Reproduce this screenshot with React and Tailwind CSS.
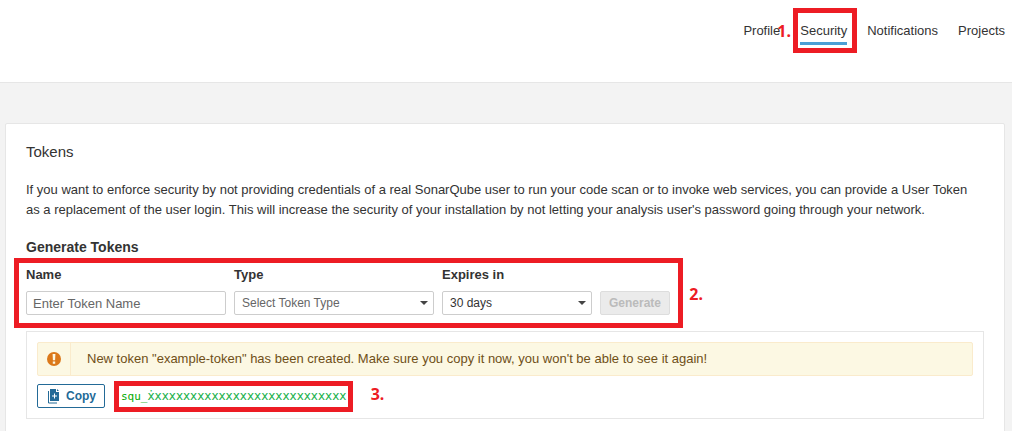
import React from "react";

const links = ["Profile", "Security", "Notifications", "Projects"];

function Mark({ className }) {
  return <div className={`pointer-events-none absolute border-5 border-[#ed1c24] ${className}`} />;
}

function Step({ children, className }) {
  return (
    <span className={`pointer-events-none absolute font-['Noto_Sans',sans-serif] text-base leading-5 font-bold text-[#ed1c24] ${className}`}>
      {children}
    </span>
  );
}

function Picker({ id, label, className, children }) {
  return (
    <div className={`flex flex-col gap-[6px] ${className}`}>
      <label htmlFor={id} className="leading-5 font-bold">{label}</label>
      <div className="relative flex">
        {children}
        <svg className="pointer-events-none absolute top-[10px] right-[6px]" width="8" height="4" viewBox="0 0 8 4" aria-hidden="true">
          <path d="M0 0h8L4 4z" fill="#444" />
        </svg>
      </div>
    </div>
  );
}

export default function App() {
  return (
    <div className="min-h-screen bg-[#f3f3f3] font-['Liberation_Sans',Arial,sans-serif] text-[13px] leading-5 text-[#333]">
      <header className="h-[83px] border-b border-[#e6e6e6] bg-white">
        <nav className="flex justify-end gap-5 pt-[21px] pr-[7px]">
          {links.map((name) => (
            <div key={name} className="relative">
              <a
                href={`#${name.toLowerCase()}`}
                className={name === "Security" ? "block border-b-3 border-[#4b9fd5] pb-px" : "block"}
              >
                {name}
              </a>
              {name === "Security" && (
                <>
                  <Mark className="-top-[13px] -right-[10px] -bottom-2 -left-[7px]" />
                  <Step className="top-0 -left-[23px]">1.</Step>
                </>
              )}
            </div>
          ))}
        </nav>
      </header>

      <main className="pt-10 pr-[7px] pl-[5px]">
        <section className="min-h-80 rounded-t-[2px] border border-[#e6e6e6] bg-white p-5">
          <h2 className="text-[15px] leading-4">Tokens</h2>
          <p className="mt-5">
            If you want to enforce security by not providing credentials of a real SonarQube user to run your code scan or to invoke web services, you can provide a User Token as a replacement of the user login. This will increase the security of your installation by not letting your analysis user's password going through your network.
          </p>
          <h3 className="mt-4 text-sm leading-[22px] font-bold">Generate Tokens</h3>

          <div className="relative mt-[7px] flex w-fit items-end">
            <div className="flex w-[200px] flex-col gap-[6px]">
              <label htmlFor="token-name" className="leading-5 font-bold">Name</label>
              <input id="token-name" placeholder="Enter Token Name" className="h-6 rounded-[2px] border border-[#cdcdcd] px-[6px] placeholder:text-[#666]" />
            </div>
            <Picker id="token-type" label="Type" className="ml-2 w-[200px]">
              <select id="token-type" defaultValue="" className="h-6 w-full appearance-none rounded-[2px] border border-[#cdcdcd] bg-white px-[7px] text-xs text-[#666]">
                <option value="">Select Token Type</option>
                <option>User Token</option>
              </select>
            </Picker>
            <Picker id="token-expiry" label="Expires in" className="ml-2 w-[150px]">
              <select id="token-expiry" className="h-6 w-full appearance-none rounded-[2px] border border-[#cdcdcd] bg-white px-[7px] text-xs">
                <option>30 days</option>
                <option>90 days</option>
              </select>
            </Picker>
            <button disabled className="ml-2 h-6 w-[70px] rounded-[2px] border border-[#ddd] bg-[#ebebeb] text-xs font-bold text-[#bbb]">Generate</button>
            <Mark className="-top-[7px] -right-[13px] -bottom-[13px] -left-[12px]" />
            <Step className="-right-[33px] bottom-[11px]">2.</Step>
          </div>

          <div className="mt-4 border border-[#e6e6e6] p-[10px]">
            <div role="alert" className="flex h-[34px] items-center rounded-[2px] border border-[#faebcc] bg-[#fcf8e3] text-[#6f4f17]">
              <div className="flex h-full w-[33px] items-center justify-center border-r border-[#faebcc]">
                <svg width="14" height="14" viewBox="0 0 14 14" aria-hidden="true">
                  <circle cx="7" cy="7" r="7" fill="#db781a" />
                  <path d="M5.6 2h2.8L8.1 8.3H5.9zM5.8 9.5h2.4v2.3H5.8z" fill="#fcf8e3" />
                </svg>
              </div>
              <p className="pl-4">New token "example-token" has been created. Make sure you copy it now, you won't be able to see it again!</p>
            </div>
            <div className="mt-2 flex items-center">
              <button className="flex h-6 w-[68px] items-center gap-[6px] rounded-[2px] border border-[#236a97] pl-[10px] text-xs font-bold text-[#236a97]">
                <svg width="12" height="16" viewBox="0 0 12 16" aria-hidden="true">
                  <path d="M2 1h6v3h3v9H2zM9 1l2 2H9z" fill="#236a97" />
                  <path d="M.5 3v12H9" fill="none" stroke="#236a97" />
                  <path d="M6.5 5.5v5M4 8h5" stroke="#fff" />
                </svg>
                Copy
              </button>
              <div className="relative ml-4">
                <code className="block font-['DejaVu_Sans_Mono',monospace] text-[11px] leading-5 text-[#00aa00]">
                  squ_<span className="font-['DejaVu_Sans',sans-serif] text-xs leading-5 text-[#22b14c]">ẋxxxxxxxxxxxxxxxxxxxxxxxxxxx</span>
                </code>
                <Mark className="-top-[5px] -right-[7px] -bottom-[5px] -left-[7px]" />
                <Step className="-top-[2px] -right-[38px]">3.</Step>
              </div>
            </div>
          </div>
        </section>
      </main>
    </div>
  );
}
